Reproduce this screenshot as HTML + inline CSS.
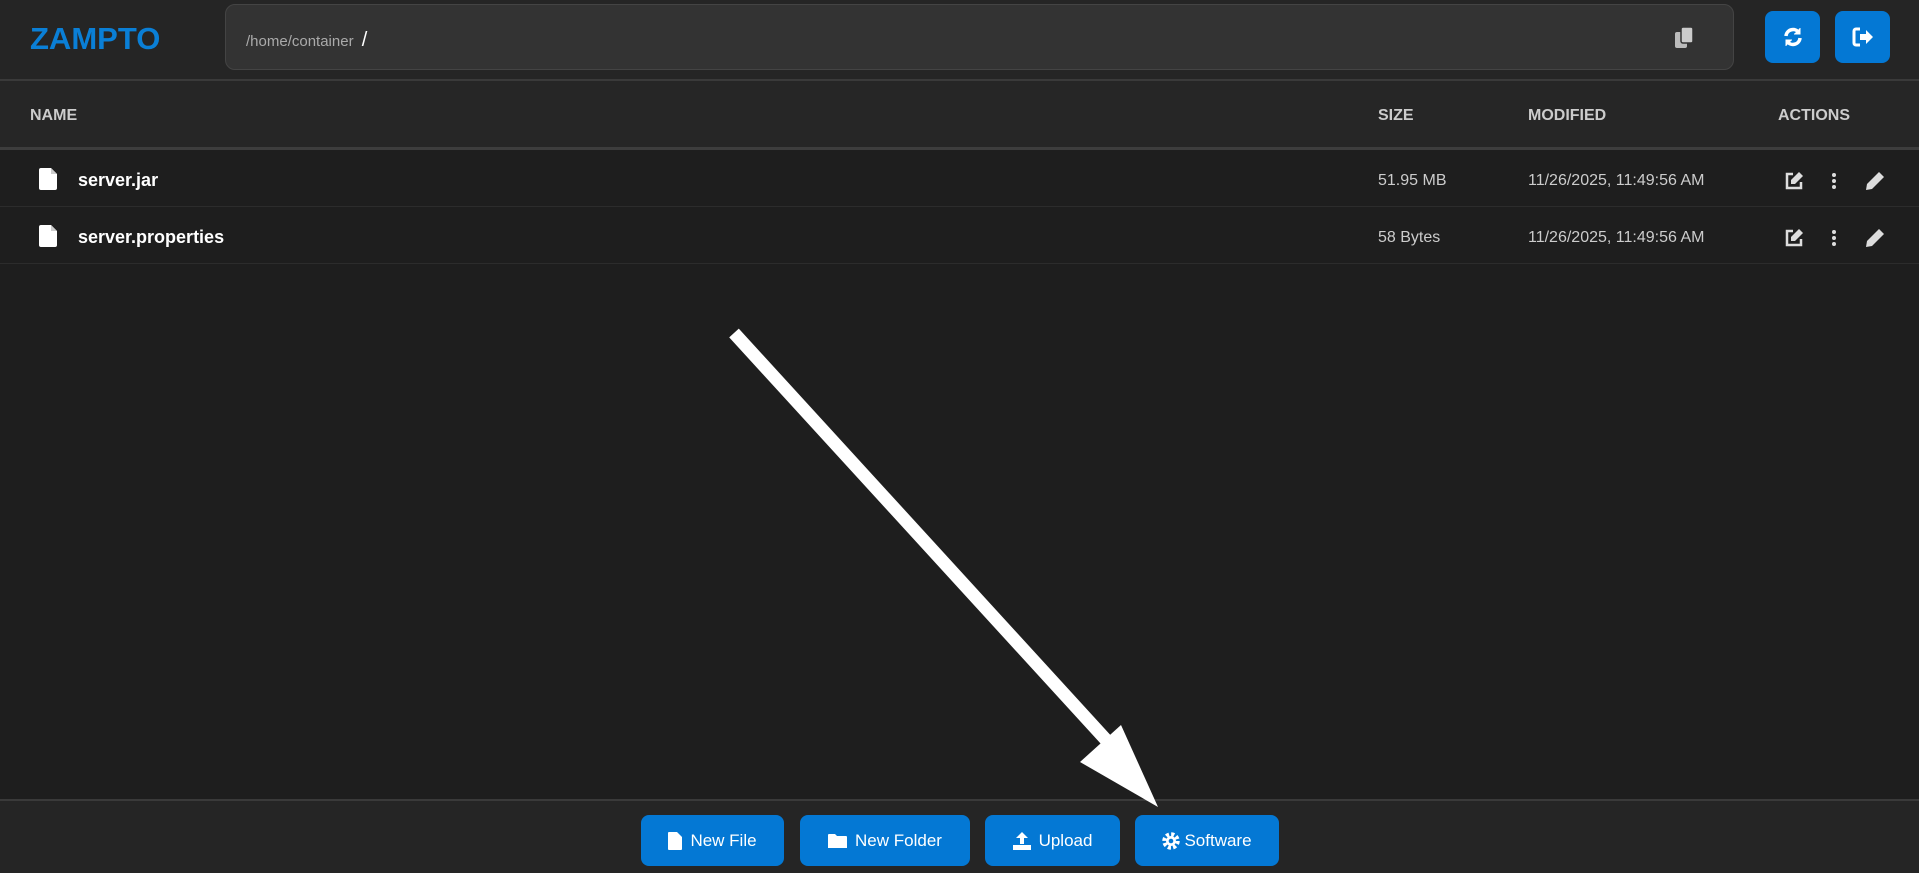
<!DOCTYPE html>
<html><head><meta charset="utf-8"><style>
*{box-sizing:border-box;margin:0;padding:0}
body{width:1919px;height:873px;background:#1e1e1e;font-family:"Liberation Sans",sans-serif;position:relative;overflow:hidden;color:#fff}
.hdr{position:absolute;left:0;top:0;width:1919px;height:81px;background:#252525;border-bottom:2px solid #3a3a3a}
.logo{position:absolute;left:30px;top:21px;font-size:31px;font-weight:bold;color:#0a7fd6}
.path{position:absolute;left:225px;top:4px;width:1509px;height:66px;background:#333;border:1px solid #444;border-radius:10px}
.path span{position:absolute;left:20px;top:24px;font-size:15px;color:#aaa}
.path b{color:#fff;font-size:20px;font-weight:normal;margin-left:4px}
.btn{position:absolute;background:#0478d4;border-radius:8px;display:flex;align-items:center;justify-content:center;color:#fff}
.th{position:absolute;left:0;top:81px;width:1919px;height:69px;background:#262626;border-bottom:3px solid #3d3d3d}
.th div{position:absolute;top:26px;font-size:16px;font-weight:bold;color:#ccc}
.row{position:absolute;left:0;width:1919px;height:56px;border-bottom:1px solid #2c2c2c}
.row .n{position:absolute;left:78px;top:19px;font-size:18px;font-weight:bold}
.row .s,.row .m{position:absolute;top:21px;font-size:16px;color:#ccc}
.row .s{left:1378px}.row .m{left:1528px}
.ic{position:absolute;top:18px}
.foot{position:absolute;left:0;top:799px;width:1919px;height:74px;background:#252525;border-top:2px solid #3a3a3a}
.fb{position:absolute;top:815px;height:51px;background:#0478d4;border-radius:8px;color:#fff;font-size:17px;display:flex;align-items:center;justify-content:center;gap:8px}
</style></head><body>
<div class="hdr">
<div class="logo">ZAMPTO</div>
<div class="path"><span>/home/container <b>/</b></span>
<svg style="position:absolute;right:38px;top:22px" width="20" height="22" viewBox="0 0 20 22"><rect x="0" y="5" width="12" height="16" rx="2" fill="#bbb"/><rect x="6" y="0" width="12" height="16" rx="2" fill="#ccc" stroke="#333" stroke-width="1.5"/></svg>
</div>
<div class="btn" style="left:1765px;top:11px;width:55px;height:52px"><svg width="22" height="22" viewBox="0 0 22 22" fill="none" stroke="#fff" stroke-width="3.5"><path d="M4 10a7 7 0 0 1 13-3"/><path d="M18 12a7 7 0 0 1-13 3"/><path d="M18 2v6h-6" fill="#fff" stroke-width="1"/><path d="M4 20v-6h6" fill="#fff" stroke-width="1"/></svg></div>
<div class="btn" style="left:1835px;top:11px;width:55px;height:52px"><svg width="22" height="22" viewBox="0 0 22 22"><path d="M8 3H4a2 2 0 0 0-2 2v12a2 2 0 0 0 2 2h4" fill="none" stroke="#fff" stroke-width="3"/><path d="M8 8h6V4l7 7-7 7v-4H8z" fill="#fff"/></svg></div>
</div>
<div class="th"><div style="left:30px">NAME</div><div style="left:1378px">SIZE</div><div style="left:1528px">MODIFIED</div><div style="left:1778px">ACTIONS</div></div>
<div class="row" style="top:151px">
<svg class="ic" style="left:39px;top:17px" width="19" height="22" viewBox="0 0 19 22"><path d="M2 0h10l6 6v14a2 2 0 0 1-2 2H2a2 2 0 0 1-2-2V2a2 2 0 0 1 2-2z" fill="#fff"/><path d="M12 0v6h6" fill="#ccc"/></svg>
<div class="n">server.jar</div><div class="s">51.95 MB</div><div class="m">11/26/2025, 11:49:56 AM</div>
<svg class="ic" style="left:1784px;top:20px" width="20" height="20" viewBox="0 0 20 20"><path d="M9 3H3v14h14v-6" fill="none" stroke="#ddd" stroke-width="2.5"/><path d="M15 1l4 4-8 8H7V9z" fill="#ddd"/></svg>
<svg class="ic" style="left:1831px;top:21px" width="6" height="18" viewBox="0 0 6 18" fill="#ddd"><circle cx="3" cy="3" r="2"/><circle cx="3" cy="9" r="2"/><circle cx="3" cy="15" r="2"/></svg>
<svg class="ic" style="left:1865px;top:20px" width="20" height="20" viewBox="0 0 20 20"><path d="M14 1l5 5L7 18l-6 1 1-6z" fill="#ddd"/></svg>
</div>
<div class="row" style="top:208px">
<svg class="ic" style="left:39px;top:17px" width="19" height="22" viewBox="0 0 19 22"><path d="M2 0h10l6 6v14a2 2 0 0 1-2 2H2a2 2 0 0 1-2-2V2a2 2 0 0 1 2-2z" fill="#fff"/><path d="M12 0v6h6" fill="#ccc"/></svg>
<div class="n">server.properties</div><div class="s">58 Bytes</div><div class="m">11/26/2025, 11:49:56 AM</div>
<svg class="ic" style="left:1784px;top:20px" width="20" height="20" viewBox="0 0 20 20"><path d="M9 3H3v14h14v-6" fill="none" stroke="#ddd" stroke-width="2.5"/><path d="M15 1l4 4-8 8H7V9z" fill="#ddd"/></svg>
<svg class="ic" style="left:1831px;top:21px" width="6" height="18" viewBox="0 0 6 18" fill="#ddd"><circle cx="3" cy="3" r="2"/><circle cx="3" cy="9" r="2"/><circle cx="3" cy="15" r="2"/></svg>
<svg class="ic" style="left:1865px;top:20px" width="20" height="20" viewBox="0 0 20 20"><path d="M14 1l5 5L7 18l-6 1 1-6z" fill="#ddd"/></svg>
</div>
<div class="foot"></div>
<div class="fb" style="left:641px;width:143px"><svg width="14" height="18" viewBox="0 0 14 18"><path d="M1 0h8l5 5v12a1 1 0 0 1-1 1H1a1 1 0 0 1-1-1V1a1 1 0 0 1 1-1z" fill="#fff"/></svg>New File</div>
<div class="fb" style="left:800px;width:170px"><svg width="19" height="16" viewBox="0 0 19 16"><path d="M0 2a1 1 0 0 1 1-1h6l2 2h9a1 1 0 0 1 1 1v11H0z" fill="#fff"/></svg>New Folder</div>
<div class="fb" style="left:985px;width:135px"><svg width="18" height="18" viewBox="0 0 18 18" fill="#fff"><path d="M9 0l6 6h-4v6H7V6H3z"/><path d="M0 13h18v5H0z"/></svg>Upload</div>
<div class="fb" style="left:1135px;width:144px;gap:4px"><svg width="18" height="18" viewBox="0 0 18 18"><circle cx="9" cy="9" r="6.5" fill="none" stroke="#fff" stroke-width="4.5" stroke-dasharray="3 2.1"/><circle cx="9" cy="9" r="5" fill="#fff"/><circle cx="9" cy="9" r="2.3" fill="#0478d4"/></svg>Software</div>
<svg style="position:absolute;left:0;top:0" width="1919" height="873"><line x1="734" y1="333" x2="1108" y2="742" stroke="#fff" stroke-width="13"/><polygon points="1121,725 1080,762 1158,807" fill="#fff"/></svg>
</body></html>
